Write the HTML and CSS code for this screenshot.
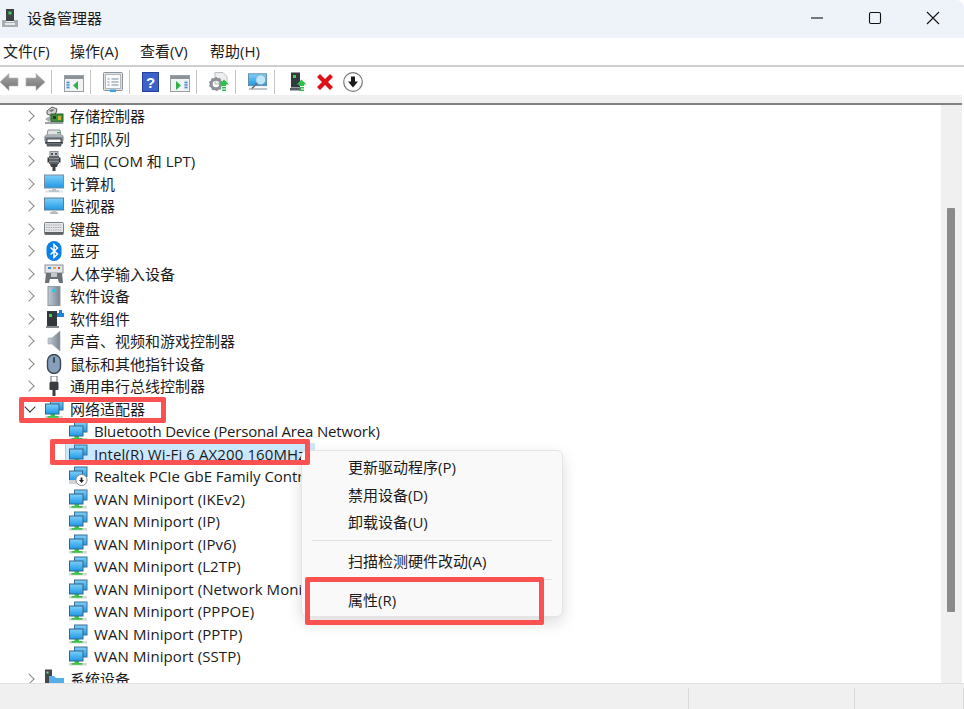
FILE: index.html
```html
<!DOCTYPE html>
<html lang="zh-CN">
<head>
<meta charset="utf-8">
<title>设备管理器</title>
<link rel="stylesheet" href="styles.css">
</head>
<body>
<svg class="defs" aria-hidden="true">
  <defs>
    <linearGradient id="blue" x1="0" y1="0" x2="0" y2="1"><stop offset="0" stop-color="#7fd0f8"/><stop offset="1" stop-color="#1e98e6"/></linearGradient>
    <linearGradient id="metal" x1="0" y1="0" x2="1" y2="0"><stop offset="0" stop-color="#c4ccd4"/><stop offset="1" stop-color="#77838f"/></linearGradient>
    <linearGradient id="arrow" x1="0" y1="0" x2="0" y2="1"><stop offset="0" stop-color="#a8a8a8"/><stop offset="1" stop-color="#727272"/></linearGradient>
    <symbol id="net" viewBox="0 0 20 20">
      <rect x="1" y="17" width="18" height="2.500" fill="#d5d9d5"/>
      <rect x="6.500" y="14.500" width="4.500" height="3" fill="#3fc24c"/>
      <rect x="3.500" y="17" width="11" height="1.800" fill="#3fc24c"/>
      <rect x="6.500" y="1" width="12.500" height="10" fill="url(#blue)" stroke="#3f6f92"/>
      <rect x="1.500" y="5" width="13.500" height="10" fill="url(#blue)" stroke="#35648a"/>
    </symbol>
    <symbol id="nic" viewBox="0 0 20 20">
      <rect x="6.500" y="1" width="12.500" height="9.500" fill="url(#blue)" stroke="#3f6f92"/>
      <rect x="1.500" y="5" width="13" height="9.500" fill="url(#blue)" stroke="#35648a"/>
      <rect x="1" y="14" width="12" height="4" fill="#cfd4d8"/>
      <circle cx="13.500" cy="14" r="5.600" fill="#fff" stroke="#8b8b8b"/>
      <path d="M12.600 11.500h1.800v2.500h1.600l-2.500 3-2.500-3h1.600z" fill="#222"/>
    </symbol>
    <symbol id="storage" viewBox="0 0 20 20">
      <path d="M3 5l5-4 5 2-1 4-4 3-5-2z" fill="#d3d6d8" stroke="#555"/>
      <path d="M5 5l3-2 2.500 1-3 2z" fill="#777"/>
      <path d="M1 13l5-3 3 2-4 4z" fill="#a9aeb2"/>
      <rect x="7" y="8" width="12" height="8" fill="#3e8f3c" stroke="#2b5f2d"/>
      <rect x="9" y="10" width="3" height="3" fill="#1f3d25"/><rect x="14" y="10" width="3" height="4" fill="#c2b23c"/>
      <rect x="1" y="16" width="18" height="2" fill="#9aa0a5"/>
    </symbol>
    <symbol id="printer" viewBox="0 0 20 20">
      <path d="M4 1h12l1 5H3z" fill="#dfe3e6" stroke="#8a8f94"/>
      <rect x="0.500" y="6" width="19" height="7" rx="1.500" fill="#7e868d"/>
      <rect x="1" y="6" width="18" height="2" fill="#a9b0b6"/>
      <rect x="13" y="3" width="3" height="1.400" fill="#37b24d"/>
      <rect x="3" y="10" width="14" height="6" fill="#fff" stroke="#4a4f54"/>
      <rect x="1" y="13" width="18" height="1.600" fill="#3a3f44"/>
      <rect x="3" y="14.500" width="14" height="3" fill="#555c62"/>
    </symbol>
    <symbol id="port" viewBox="0 0 20 20">
      <rect x="6" y="0.500" width="8" height="5" fill="#c2c6ca" stroke="#8a8f94"/>
      <rect x="7" y="2" width="2" height="2" fill="#555"/><rect x="11" y="2" width="2" height="2" fill="#555"/>
      <rect x="5" y="5" width="10" height="8" fill="#5f6468"/>
      <rect x="5" y="7" width="10" height="1" fill="#8b9094"/><rect x="5" y="10" width="10" height="1" fill="#8b9094"/>
      <rect x="3.500" y="6.500" width="1.500" height="5" fill="#33373a"/><rect x="15" y="6.500" width="1.500" height="5" fill="#33373a"/>
      <path d="M6 13h8l-1 3h-6z" fill="#3d4144"/><rect x="8.500" y="16" width="3" height="4" fill="#3d4144"/>
    </symbol>
    <symbol id="monitor" viewBox="0 0 20 20">
      <rect x="0.500" y="1" width="19" height="13" fill="url(#blue)" stroke="#7b8d9c"/>
      <rect x="8" y="14" width="4" height="3" fill="#b9c4cc"/>
      <rect x="1" y="16.500" width="18" height="2" fill="#dfe3e6"/>
      <rect x="5" y="16.500" width="10" height="1" fill="#9aa7b0"/>
    </symbol>
    <symbol id="screen" viewBox="0 0 20 20">
      <rect x="0.500" y="2" width="19" height="12" fill="url(#blue)" stroke="#5c7d96"/>
      <rect x="7.500" y="14.500" width="5" height="2" fill="#bcc6ce"/>
      <rect x="6" y="16.500" width="8" height="1.200" fill="#8f9ba4"/>
    </symbol>
    <symbol id="keyboard" viewBox="0 0 20 20">
      <rect x="0.500" y="3.500" width="19" height="12" rx="1" fill="#e6e8ea" stroke="#7c8287"/>
      <path d="M2 6h16M2 8.500h16M2 11h16" stroke="#a1a6ab" stroke-width="1.200" stroke-dasharray="1.500 .8"/>
      <rect x="1" y="13" width="18" height="2.500" fill="#5e6368"/>
    </symbol>
    <symbol id="bt" viewBox="0 0 20 20">
      <rect x="2.500" y="0" width="15" height="20" rx="7.500" fill="#0a7fe8"/>
      <path d="M6.500 6.500l7 6.500-3.500 3.500V3.500l3.500 3.500-7 6.500" fill="none" stroke="#fff" stroke-width="1.500"/>
    </symbol>
    <symbol id="hid" viewBox="0 0 20 20">
      <rect x="1" y="1" width="18" height="8" fill="#e3e6e8" stroke="#8b9095"/>
      <rect x="4" y="3" width="3" height="2" fill="#3a8fd8"/><rect x="9" y="3" width="3" height="2" fill="#e3a93a"/><rect x="14" y="3" width="2" height="2" fill="#d24b4b"/>
      <path d="M1 19l1-10h16l1 10h-4l-1-4H6l-1 4z" fill="#6a7076"/>
      <rect x="7" y="9" width="6" height="4" fill="#c3c8cc"/>
    </symbol>
    <symbol id="softdev" viewBox="0 0 20 20">
      <rect x="4" y="0.500" width="12" height="19" fill="url(#metal)" stroke="#8d98a3"/>
      <rect x="8" y="3" width="3" height="3" fill="#37c6e0"/>
    </symbol>
    <symbol id="softcomp" viewBox="0 0 20 20">
      <rect x="3" y="2" width="10" height="15" fill="#33383c"/>
      <rect x="5" y="5" width="3" height="3" fill="#39d353"/>
      <rect x="2" y="17" width="13" height="2" fill="#85898d"/>
      <path d="M13 4h2V1h3v3h2v4h-7z" fill="#1e84d8"/>
    </symbol>
    <symbol id="sound" viewBox="0 0 20 20">
      <path d="M4 7h4l8-7v20l-8-7H4z" fill="url(#metal)" stroke="#9ca3aa" stroke-width=".6"/>
    </symbol>
    <symbol id="mouse" viewBox="0 0 20 20">
      <rect x="3.500" y="0.500" width="13" height="19" rx="6.500" fill="#85a0bd" stroke="#3e4750" stroke-width="1.400"/>
      <rect x="9" y="3" width="2" height="6" rx="1" fill="#3f4a55"/>
    </symbol>
    <symbol id="usb" viewBox="0 0 20 20">
      <rect x="7" y="0" width="6" height="6" fill="none" stroke="#6d7175"/>
      <rect x="5.500" y="6" width="9" height="8" rx="1" fill="#3a3e42"/>
      <rect x="8.500" y="14" width="3" height="6" fill="#3a3e42"/>
    </symbol>
    <symbol id="system" viewBox="0 0 20 20">
      <rect x="1" y="0.500" width="7" height="17" fill="#42474c"/>
      <rect x="2.500" y="2.500" width="2" height="2" fill="#7fe08c"/>
      <path d="M5 7h5l2 2h8v10H5z" fill="#55aee8"/>
    </symbol>
    <symbol id="appicon" viewBox="0 0 18 20">
      <rect x="5" y="1" width="8" height="12" fill="#3d4247"/>
      <rect x="7.500" y="3.500" width="3" height="3" fill="#3fd35a"/>
      <path d="M1 12h4v2h8v-2h4v7H1z" fill="#a8adb1"/>
      <rect x="4" y="15" width="10" height="2" fill="#e5e7e8"/>
    </symbol>
    <symbol id="back" viewBox="0 0 20 20">
      <path d="M0 10l9-8.500V6h9v8H9v4.500z" fill="url(#arrow)" stroke="#b5b5b5" stroke-width=".6"/>
    </symbol>
    <symbol id="forward" viewBox="0 0 20 20">
      <path d="M20 10l-9-8.500V6H1v8h10v4.500z" fill="url(#arrow)" stroke="#b5b5b5" stroke-width=".6"/>
    </symbol>
    <symbol id="panel-left" viewBox="0 0 20 20">
      <rect x="0.500" y="3.500" width="19" height="16" fill="#f2f3f3" stroke="#9a9fa3"/>
      <rect x="1" y="4" width="18" height="3" fill="#8b9298"/>
      <rect x="2" y="8.500" width="4" height="9" fill="#dfe9f3"/>
      <path d="M2.500 10.500h3M2.500 13h3M2.500 15.500h3" stroke="#4a90d0" stroke-width="1.300"/>
      <path d="M14 9v9l-5-4.500z" fill="#2fb24b"/>
    </symbol>
    <symbol id="panel-right" viewBox="0 0 20 20">
      <rect x="0.500" y="3.500" width="19" height="16" fill="#f2f3f3" stroke="#9a9fa3"/>
      <rect x="1" y="4" width="18" height="3" fill="#8b9298"/>
      <rect x="14" y="8.500" width="4" height="9" fill="#dfe9f3"/>
      <path d="M14.500 10.500h3M14.500 13h3M14.500 15.500h3" stroke="#4a90d0" stroke-width="1.300"/>
      <path d="M6 9v9l5-4.500z" fill="#2fb24b"/>
    </symbol>
    <symbol id="props" viewBox="0 0 20 20">
      <rect x="0.500" y="0.500" width="19" height="18" rx="1" fill="#dfe2e4" stroke="#8e9296"/>
      <rect x="2.500" y="2.500" width="15" height="14" fill="#fafafa" stroke="#b3b7ba"/>
      <path d="M4.500 7h2M8.500 7h7M4.500 10h2M8.500 10h7M4.500 13h2M8.500 13h7" stroke="#7a8fa3"/>
      <rect x="7" y="17.500" width="6" height="2.500" fill="#3aa0e0"/>
    </symbol>
    <symbol id="help" viewBox="0 0 17 20" preserveAspectRatio="xMinYMid">
      <rect x="0" y="0" width="17" height="20" fill="#23409c"/>
      <rect x="1" y="1" width="15" height="18" fill="#3a62c8"/>
      <text x="8.500" y="15.500" text-anchor="middle" class="help-mark">?</text>
    </symbol>
    <symbol id="update" viewBox="0 0 20 20">
      <path d="M6 0.500h8l4 4V12H6z" fill="#eceeef" stroke="#b9bdc0"/>
      <circle cx="7" cy="12" r="4.800" fill="none" stroke="#8c9297" stroke-width="3"/>
      <circle cx="7" cy="12" r="6.300" fill="none" stroke="#8c9297" stroke-width="1.500" stroke-dasharray="2 2"/>
      <path d="M15 7.500l5 5h-3v1.500h-4v-1.500h-3z" fill="#2cc24a"/>
      <path d="M13 15h4v1.500h-4zM13 17.500h4V19h-4z" fill="#2cc24a"/>
    </symbol>
    <symbol id="scan" viewBox="0 0 22 20">
      <rect x="0.500" y="1" width="20" height="13" fill="url(#blue)" stroke="#5d8aa8"/>
      <circle cx="14" cy="7.500" r="5.500" fill="#bde6f8" stroke="#6fa8c8"/>
      <path d="M10 11.500l-6 6" stroke="#6b7278" stroke-width="1.800"/>
      <rect x="1" y="17" width="20" height="1.400" fill="#9aa6ae"/>
    </symbol>
    <symbol id="driver" viewBox="0 0 20 20">
      <rect x="4" y="0.500" width="9" height="15" fill="#33383c"/>
      <rect x="6" y="3" width="3" height="3" fill="#39d353"/>
      <rect x="3" y="16" width="11" height="2.500" fill="#5a5f63"/>
      <path d="M14.500 7.500l5 5H17V14h-5v-1.500H9.500z" fill="#2cc24a"/>
      <path d="M12 15h5v1.500h-5zM12 17.500h5V19h-5z" fill="#2cc24a"/>
    </symbol>
    <symbol id="remove" viewBox="0 0 20 20">
      <path d="M2 5l3-3 5 5 5-5 3 3-5 5 5 5-3 3-5-5-5 5-3-3 5-5z" fill="#e0101a"/>
    </symbol>
    <symbol id="down" viewBox="0 0 20 20">
      <circle cx="10" cy="10" r="9.300" fill="#fff" stroke="#777" stroke-width="1.200"/>
      <path d="M8 4.500h4v5h3l-5 6-5-6h3z" fill="#1b1b1b"/>
    </symbol>
  </defs>
</svg>

<div class="window">
  <header class="titlebar">
    <svg class="app-icon"><use href="#appicon"/></svg>
    <span class="title">设备管理器</span>
    <div class="controls">
      <svg class="ctl" viewBox="0 0 14 14"><path d="M1 7h12" class="ctl-line"/></svg>
      <svg class="ctl" viewBox="0 0 14 14"><rect x="1.500" y="1.500" width="11" height="11" rx="1.500" class="ctl-line"/></svg>
      <svg class="ctl" viewBox="0 0 14 14"><path d="M1 1l12 12M13 1L1 13" class="ctl-line"/></svg>
    </div>
  </header>

  <nav class="menubar">
    <span class="menu-item">文件(F)</span>
    <span class="menu-item">操作(A)</span>
    <span class="menu-item">查看(V)</span>
    <span class="menu-item">帮助(H)</span>
  </nav>

  <div class="toolbar">
    <div class="tool-group first">
      <svg class="tool"><use href="#back"/></svg>
      <svg class="tool"><use href="#forward"/></svg>
    </div>
    <div class="tool-group"><svg class="tool"><use href="#panel-left"/></svg></div>
    <div class="tool-group"><svg class="tool"><use href="#props"/></svg></div>
    <div class="tool-group">
      <svg class="tool"><use href="#help"/></svg>
      <svg class="tool"><use href="#panel-right"/></svg>
    </div>
    <div class="tool-group"><svg class="tool"><use href="#update"/></svg></div>
    <div class="tool-group"><svg class="tool"><use href="#scan"/></svg></div>
    <div class="tool-group last">
      <svg class="tool"><use href="#driver"/></svg>
      <svg class="tool"><use href="#remove"/></svg>
      <svg class="tool"><use href="#down"/></svg>
    </div>
  </div>

  <div class="gutter"></div>

  <main class="content">
    <ul class="tree">
      <li class="row"><i class="chev"></i><svg class="ico"><use href="#storage"/></svg><span>存储控制器</span></li>
      <li class="row"><i class="chev"></i><svg class="ico"><use href="#printer"/></svg><span>打印队列</span></li>
      <li class="row"><i class="chev"></i><svg class="ico"><use href="#port"/></svg><span>端口 (COM 和 LPT)</span></li>
      <li class="row"><i class="chev"></i><svg class="ico"><use href="#monitor"/></svg><span>计算机</span></li>
      <li class="row"><i class="chev"></i><svg class="ico"><use href="#screen"/></svg><span>监视器</span></li>
      <li class="row"><i class="chev"></i><svg class="ico"><use href="#keyboard"/></svg><span>键盘</span></li>
      <li class="row"><i class="chev"></i><svg class="ico"><use href="#bt"/></svg><span>蓝牙</span></li>
      <li class="row"><i class="chev"></i><svg class="ico"><use href="#hid"/></svg><span>人体学输入设备</span></li>
      <li class="row"><i class="chev"></i><svg class="ico"><use href="#softdev"/></svg><span>软件设备</span></li>
      <li class="row"><i class="chev"></i><svg class="ico"><use href="#softcomp"/></svg><span>软件组件</span></li>
      <li class="row"><i class="chev"></i><svg class="ico"><use href="#sound"/></svg><span>声音、视频和游戏控制器</span></li>
      <li class="row"><i class="chev"></i><svg class="ico"><use href="#mouse"/></svg><span>鼠标和其他指针设备</span></li>
      <li class="row"><i class="chev"></i><svg class="ico"><use href="#usb"/></svg><span>通用串行总线控制器</span></li>
      <li class="row"><i class="chev open"></i><svg class="ico"><use href="#net"/></svg><span>网络适配器</span></li>
      <li class="row child tight"><svg class="ico"><use href="#net"/></svg><span>Bluetooth Device (Personal Area Network)</span></li>
      <li class="row child selected"><svg class="ico"><use href="#net"/></svg><span>Intel(R) Wi-Fi 6 AX200 160MHz</span></li>
      <li class="row child plain"><svg class="ico"><use href="#nic"/></svg><span>Realtek PCIe GbE Family Controller</span></li>
      <li class="row child"><svg class="ico"><use href="#net"/></svg><span>WAN Miniport (IKEv2)</span></li>
      <li class="row child"><svg class="ico"><use href="#net"/></svg><span>WAN Miniport (IP)</span></li>
      <li class="row child"><svg class="ico"><use href="#net"/></svg><span>WAN Miniport (IPv6)</span></li>
      <li class="row child"><svg class="ico"><use href="#net"/></svg><span>WAN Miniport (L2TP)</span></li>
      <li class="row child"><svg class="ico"><use href="#net"/></svg><span>WAN Miniport (Network Monitor)</span></li>
      <li class="row child"><svg class="ico"><use href="#net"/></svg><span>WAN Miniport (PPPOE)</span></li>
      <li class="row child"><svg class="ico"><use href="#net"/></svg><span>WAN Miniport (PPTP)</span></li>
      <li class="row child"><svg class="ico"><use href="#net"/></svg><span>WAN Miniport (SSTP)</span></li>
      <li class="row"><i class="chev"></i><svg class="ico"><use href="#system"/></svg><span>系统设备</span></li>
    </ul>
    <div class="scrollbar"><div class="thumb"></div></div>
  </main>

  <footer class="statusbar">
    <div class="status-cell wide"></div>
    <div class="status-cell mid"></div>
    <div class="status-cell"></div>
  </footer>
</div>

<div class="context-menu">
  <div class="cm-item">更新驱动程序(P)</div>
  <div class="cm-item">禁用设备(D)</div>
  <div class="cm-item">卸载设备(U)</div>
  <div class="cm-sep"></div>
  <div class="cm-item">扫描检测硬件改动(A)</div>
  <div class="cm-sep"></div>
  <div class="cm-item">属性(R)</div>
</div>

<div class="mark mark-adapter"></div>
<div class="mark mark-device"></div>
<div class="mark mark-props"></div>
</body>
</html>
```

FILE: styles.css
```css
* { box-sizing: border-box; }
html, body { margin: 0; height: 100%; }
body {
  position: relative;
  overflow: hidden;
  background: #fff;
  color: #1b1b1b;
  font: 15px/20px "Open Sans", "Noto Sans CJK SC", sans-serif;
}
.defs { position: absolute; width: 0; height: 0; }
.help-mark { font: bold 15px "Liberation Sans", sans-serif; fill: #fff; }

.window { display: flex; flex-direction: column; height: 709px; }

.titlebar {
  display: flex;
  align-items: center;
  flex: 0 0 38px;
  padding: 0 0 2px 1px;
  background: #eef3f9;
  border-top-right-radius: 8px;
}
.app-icon { width: 18px; height: 20px; margin-right: 8px; }
.title { flex: 1; }
.controls { display: flex; gap: 44px; padding-right: 24px; }
.ctl { width: 14px; height: 14px; }
.ctl-line { fill: none; stroke: #111; stroke-width: 1.1; }

.menubar {
  display: flex;
  align-items: center;
  gap: 14px;
  flex: 0 0 29px;
  padding: 0 0 2px 3px;
  background: #fff;
  border-bottom: 2px solid #cfcfcf;
}
.menu-item { width: 56px; }
.menu-item:first-child { width: 53px; }

.toolbar { display: flex; align-items: center; flex: 0 0 28px; padding-top: 2px; background: #fff; }
.tool-group {
  display: flex;
  gap: 8px;
  align-items: center;
  height: 24px;
  padding: 0 6px 0 12px;
  border-right: 1px solid #c4c4c4;
}
.tool-group.first { gap: 5px; padding-left: 0; }
.tool-group.last { border-right: 0; }
.tool { display: block; width: 20px; height: 20px; }

.gutter { flex: 0 0 10px; background: #f0f0f0; border-bottom: 2px solid #808080; margin-right: 2px; }

.content { display: flex; flex: 1; min-height: 0; padding-right: 2px; }
.tree {
  flex: 1;
  min-width: 0;
  margin: 0;
  padding: 0;
  list-style: none;
  overflow: hidden;
  background: #fff;
}
.row {
  display: flex;
  align-items: center;
  gap: 6px;
  height: 22.5px;
  padding-left: 26px;
  white-space: nowrap;
}
.child { padding-left: 68px; letter-spacing: 0.1px; }
.tight { letter-spacing: -0.18px; }
.plain { letter-spacing: -0.05px; }
.selected {
  width: 250px;
  margin-left: 65px;
  padding-left: 2px;
  letter-spacing: 0.1px;
  background: #cce8ff;
  border-left: 1px solid #99d1ff;
}
.ico { flex: none; width: 20px; height: 20px; }
.chev { position: relative; flex: none; width: 8px; height: 12px; margin-right: 4px; }
.chev::before {
  content: "";
  position: absolute;
  left: -1px;
  top: 2px;
  width: 7px;
  height: 7px;
  border-top: 1.5px solid #8a8a8a;
  border-right: 1.5px solid #8a8a8a;
  transform: rotate(45deg);
}
.chev.open::before {
  left: 0;
  top: 0;
  border-color: #333;
  transform: rotate(135deg);
}

.scrollbar { flex: 0 0 21px; padding: 103px 7px 0 6px; background: #f0f0f0; }
.thumb { height: 404px; background: #8a8a8a; border-radius: 1px; }

.statusbar {
  display: flex;
  flex: 0 0 26px;
  padding-top: 4px;
  background: #f0f0f0;
  border-top: 1px solid #e0e0e0;
}
.status-cell { flex: 1; border-right: 1px solid #d9d9d9; }
.status-cell.wide { flex: 0 0 689px; }
.status-cell.mid { flex: 0 0 166px; }

.context-menu {
  position: absolute;
  left: 301px;
  top: 450px;
  width: 262px;
  height: 167px;
  padding: 3px 0;
  background: #f9f9f9;
  border: 1px solid #e4e4e4;
  border-radius: 6px;
  box-shadow: 0 6px 16px rgba(0, 0, 0, 0.14);
}
.cm-item { height: 27.5px; padding-left: 46px; line-height: 27px; white-space: nowrap; }
.cm-sep { height: 1px; margin: 3px 10px 7px; background: #e2e2e2; }
.cm-sep + .cm-item + .cm-sep { margin-top: 4px; }

.mark { position: absolute; border: 5px solid #fb5151; border-radius: 2px; }
.mark-adapter { left: 19px; top: 397px; width: 147px; height: 26px; }
.mark-device { left: 50px; top: 439px; width: 260px; height: 26px; }
.mark-props { left: 305px; top: 577px; width: 239px; height: 48px; }
```
